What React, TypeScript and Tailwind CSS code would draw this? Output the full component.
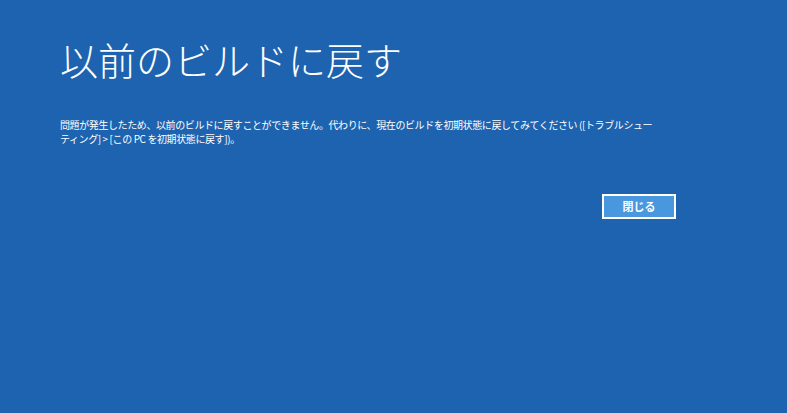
export default function App() {
  return (
    <div
      className="w-[787px] h-[413px] bg-[#1e63b0] text-white overflow-hidden"
      style={{ fontFamily: '"Noto Sans CJK JP", "Noto Sans", sans-serif' }}
    >
      <div className="pl-[60px] pt-[33px]">
        <h1 className="text-[38px] leading-[52px] font-light">以前のビルドに戻す</h1>
        <p className="mt-[33px] w-[596px] text-[10px] leading-[14px] tracking-[-0.4px]">
          問題が発生したため、以前のビルドに戻すことができません。代わりに、現在のビルドを初期状態に戻してみてください ([トラブルシューティング] &gt; [この PC を初期状態に戻す])。
        </p>
        <div className="flex justify-end w-[616px] mt-[48px]">
          <button className="w-[74px] h-[25px] border-2 border-white bg-[#4897df] text-[11px] font-bold text-white flex items-center justify-center">
            閉じる
          </button>
        </div>
      </div>
    </div>
  );
}
